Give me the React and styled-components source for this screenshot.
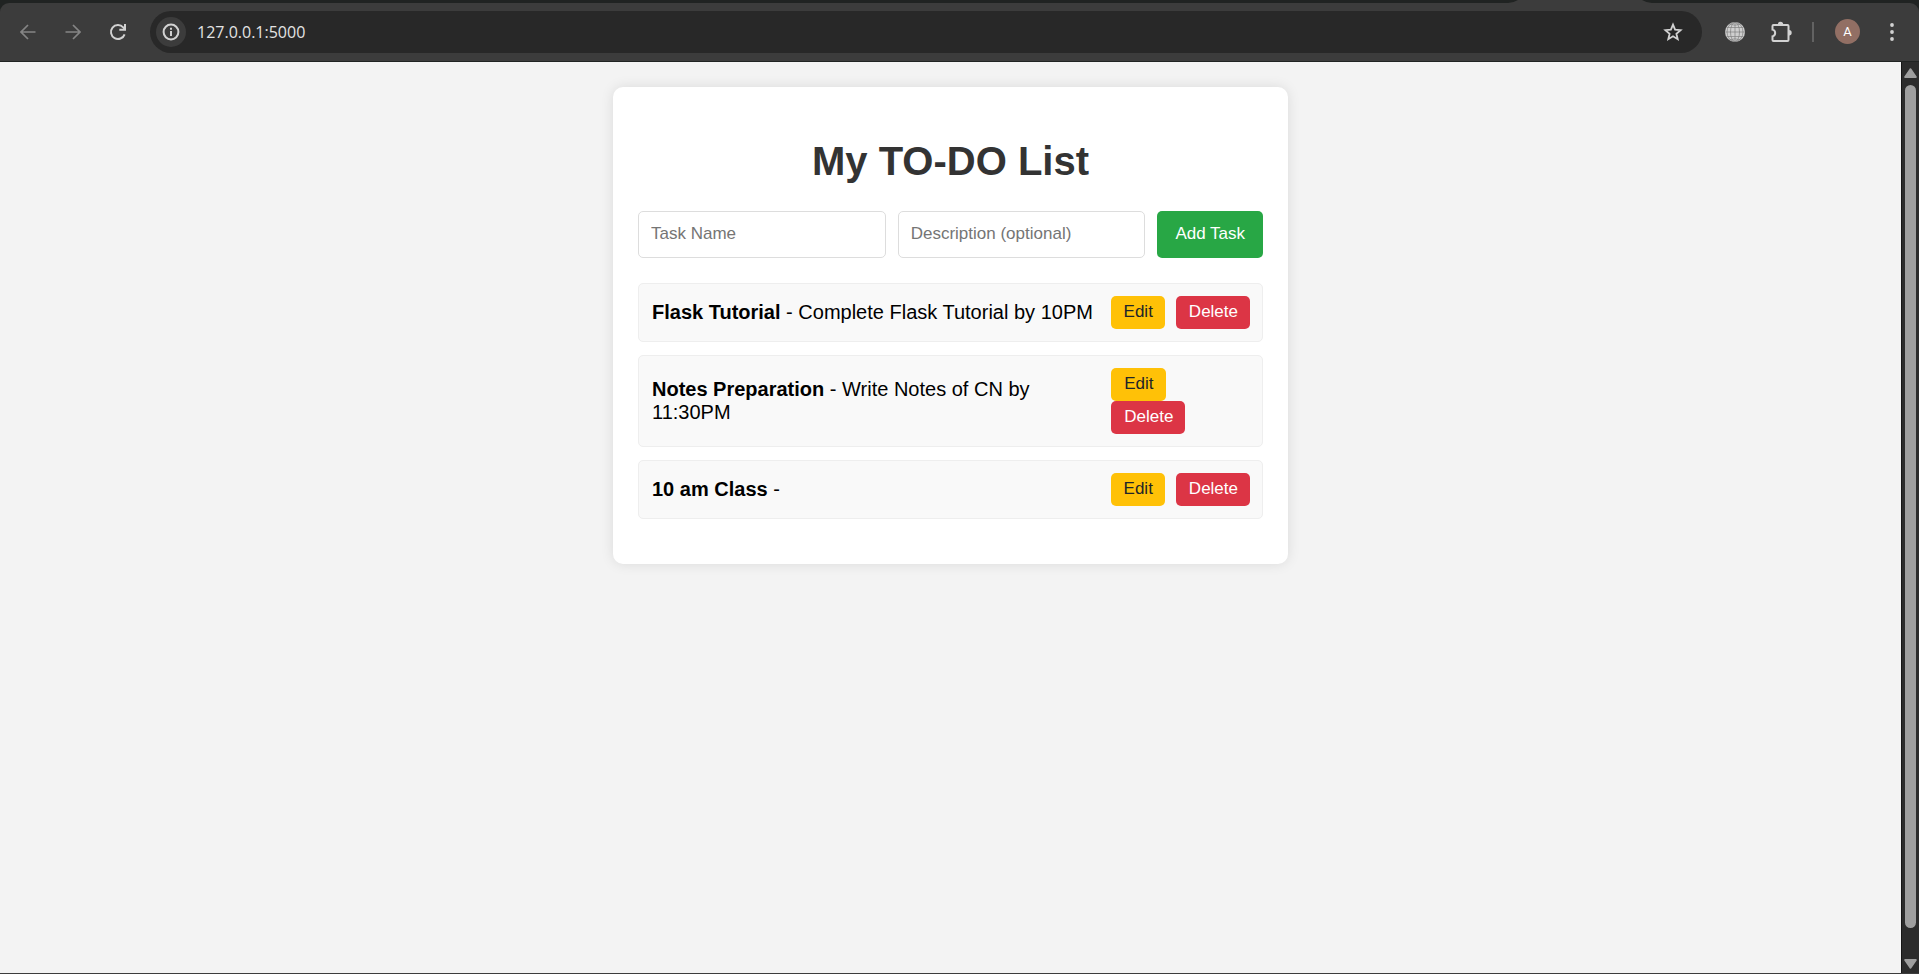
import React from "react";
import styled, { createGlobalStyle } from "styled-components";

const GlobalStyle = createGlobalStyle`
  *, *::before, *::after { box-sizing: border-box; }
  body {
    margin: 0;
    background: #f3f3f3;
    font-family: "Liberation Sans", Arial, sans-serif;
  }
  button, input { font-family: inherit; }
  svg { display: block; }
`;

const Window = styled.div`
  display: flex;
  flex-direction: column;
  min-height: 100vh;
  border-bottom: 1px solid #3c3c3c;
`;

const TabStrip = styled.div`
  display: flex;
  justify-content: flex-end;
  height: 3px;
  padding-right: 267px;
  background: #202322;
`;

const Chrome = styled.header`
  background: #202322;
`;

const Toolbar = styled.nav`
  display: flex;
  align-items: center;
  height: 59px;
  padding: 0 12px 1px 13px;
  border-radius: 9px 9px 0 0;
  border-bottom: 1px solid #202322;
  background: #3c3c3c;
`;

const IconButton = styled.button`
  display: grid;
  place-items: center;
  flex: none;
  width: 30px;
  height: 30px;
  margin: 0;
  padding: 0;
  border: 0;
  border-radius: 15px;
  background: ${(p) => p.$fill || "transparent"};
  color: ${(p) => (p.$dim ? "#858585" : "#d2d2d2")};
`;

const NavButtons = styled.div`
  display: flex;
  gap: 15px;
  margin-right: 17px;
`;

const AddressBar = styled.div`
  display: flex;
  flex: 1;
  align-items: center;
  height: 42px;
  padding: 0 14px 0 6px;
  border-radius: 21px;
  background: #282828;
`;

const AddressInput = styled.input`
  flex: 1;
  min-width: 0;
  height: 30px;
  padding: 0 0 0 11px;
  border: 0;
  outline: 0;
  background: transparent;
  color: #e3e3e3;
  font-family: "Open Sans", sans-serif;
  font-size: 16px;
`;

const Tools = styled.div`
  display: flex;
  align-items: center;
  gap: 16px;
  margin-left: 18px;
`;

const Divider = styled.span`
  width: 2px;
  height: 20px;
  background: #626262;
`;

const Avatar = styled.button`
  width: 25px;
  height: 25px;
  margin: 0 1px 0 5px;
  padding: 0;
  border: 0;
  border-radius: 50%;
  background: #926f64;
  color: #fff;
  font-family: Roboto, sans-serif;
  font-size: 13px;
  line-height: 25px;
`;

const Viewport = styled.div`
  display: flex;
  flex: 1;
`;

const Page = styled.main`
  flex: 1;
  min-width: 0;
  padding: 25px;
  background: #f3f3f3;
`;

const ScrollRail = styled.div`
  display: flex;
  flex-direction: column;
  align-items: center;
  gap: 7px;
  width: 18px;
  padding: 6px 1px 4px 0;
  border-left: 1px solid #161616;
  background: #2c2c2c;
  color: #9f9f9f;
`;

const ScrollThumb = styled.div`
  flex: 1;
  width: 11px;
  margin-bottom: 24px;
  border-radius: 6px;
  background: #9f9f9f;
`;

const Card = styled.section`
  max-width: 675px;
  margin: 0 auto;
  padding: 25px;
  border-radius: 10px;
  background: #fff;
  box-shadow: 0 0 13px rgba(0, 0, 0, 0.1);
`;

const Title = styled.h1`
  margin: 26px 0;
  color: #333;
  font-size: 40px;
  line-height: 47px;
  text-align: center;
`;

const TaskForm = styled.form`
  display: flex;
  gap: 12px;
  margin-bottom: 25px;
`;

const Field = styled.input`
  flex: 1;
  min-width: 0;
  height: 47px;
  padding: 0 12px 2px;
  border: 1px solid #ddd;
  border-radius: 5px;
  background: #fff;
  font-size: 17px;
  &::placeholder { color: #757575; opacity: 1; }
`;

const AddButton = styled.button`
  padding: 0 18px 2px;
  border: 0;
  border-radius: 5px;
  background: #28a745;
  color: #fff;
  font-size: 17px;
`;

const TaskList = styled.ul`
  display: flex;
  flex-direction: column;
  gap: 13px;
  margin: 0;
  padding: 0 0 20px;
  list-style: none;
`;

const TaskRow = styled.li`
  display: flex;
  align-items: center;
  justify-content: space-between;
  padding: 12px 12px 12px 13px;
  border: 1px solid #eee;
  border-radius: 5px;
  background: #f9f9f9;
`;

const TaskText = styled.span`
  color: #000;
  font-size: 20px;
  line-height: 23px;
`;

const Actions = styled.div`
  display: flex;
  flex-wrap: wrap;
  column-gap: 11px;
`;

const tones = {
  edit: { fill: "#ffc107", ink: "#212529" },
  remove: { fill: "#dc3545", ink: "#fff" },
};

const ActionButton = styled.button`
  height: 33px;
  padding: 0 12px 2px 13px;
  border: 0;
  border-radius: 5px;
  background: ${(p) => tones[p.$tone].fill};
  color: ${(p) => tones[p.$tone].ink};
  font-size: 17px;
`;

const tasks = [
  { name: "Flask Tutorial", description: "Complete Flask Tutorial by 10PM" },
  { name: "Notes Preparation", description: "Write Notes of CN by 11:30PM" },
  { name: "10 am Class", description: "" },
];

const stroke = { fill: "none", stroke: "currentColor", strokeWidth: 2 };

const ArrowIcon = ({ flip }) => (
  <svg width="16" height="16" viewBox="0 0 16 16" {...stroke} strokeWidth="1.7">
    <path d={flip ? "M0.5 8H14M8 1l7 7-7 7" : "M15.5 8H2M8 1L1 8l7 7"} />
  </svg>
);

const ReloadIcon = () => (
  <svg width="18" height="18" viewBox="0 0 18 18" {...stroke}>
    <path d="M15.6 11.3A7 7 0 1 1 14.2 4.3L16 6.2" />
    <path d="M16 1v5.7h-5.7" />
  </svg>
);

const InfoIcon = () => (
  <svg width="18" height="18" viewBox="0 0 18 18" {...stroke}>
    <circle cx="9" cy="9" r="7.4" />
    <path d="M9 8v5M9 4.8v2" />
  </svg>
);

const StarIcon = () => (
  <svg width="20" height="20" viewBox="0 0 20 20" {...stroke} strokeWidth="1.8">
    <path d="M10 2.6l2.1 5.1 5.5.5-4.2 3.6 1.3 5.4L10 14.3l-4.7 2.9 1.3-5.4-4.2-3.6 5.5-.5z" />
  </svg>
);

const GlobeIcon = () => (
  <svg width="20" height="20" viewBox="0 0 20 20">
    <circle cx="10" cy="10" r="10" fill="#cfcfcf" />
    <g fill="none" stroke="#808080" strokeWidth="0.7">
      <ellipse cx="10" cy="10" rx="4.5" ry="9.6" />
      <ellipse cx="10" cy="10" rx="8" ry="9.6" />
      <path d="M10 0v20M0 10h20M1.5 5.5h17M1.5 14.5h17M4.5 2.2q5.5 2 11 0M4.5 17.8q5.5-2 11 0" />
    </g>
  </svg>
);

const PuzzleIcon = () => (
  <svg width="22" height="22" viewBox="0 0 22 22">
    <path
      d="M3.5 4h14a1 1 0 0 1 1 1v14a1 1 0 0 1-1 1h-14a1 1 0 0 1-1-1v-3.6a3.5 3.5 0 0 0 0-6.8V5a1 1 0 0 1 1-1z"
      {...stroke}
    />
    <path d="M7.8 3.5a2.7 2.7 0 0 1 5.4 0zM19 9a2.7 2.7 0 0 1 0 5.4z" fill="currentColor" />
  </svg>
);

const MenuIcon = () => (
  <svg width="4" height="18" viewBox="0 0 4 18" fill="currentColor">
    <circle cx="2" cy="2" r="1.9" />
    <circle cx="2" cy="9" r="1.9" />
    <circle cx="2" cy="16" r="1.9" />
  </svg>
);

const TabFoot = () => (
  <svg width="144" height="3" viewBox="0 0 144 3" fill="#3c3c3c">
    <path d="M0 3Q6 2.6 10 0h124q4 2.6 10 3z" />
  </svg>
);

const ScrollArrow = ({ down }) => (
  <svg width="13" height="10" viewBox="0 0 13 10" fill="currentColor" stroke="currentColor" strokeLinejoin="round" strokeWidth="2">
    <path d={down ? "M1.2 1h10.6L6.5 8.8z" : "M1.2 9h10.6L6.5 1.2z"} />
  </svg>
);

export default function App() {
  return (
    <Window>
      <GlobalStyle />
      <Chrome>
        <TabStrip>
          <TabFoot />
        </TabStrip>
        <Toolbar aria-label="Browser">
          <NavButtons>
            <IconButton $dim aria-label="Back"><ArrowIcon /></IconButton>
            <IconButton $dim aria-label="Forward"><ArrowIcon flip /></IconButton>
            <IconButton aria-label="Reload"><ReloadIcon /></IconButton>
          </NavButtons>
          <AddressBar>
            <IconButton $fill="#3c3c3c" aria-label="Site information"><InfoIcon /></IconButton>
            <AddressInput aria-label="Address" defaultValue="127.0.0.1:5000" />
            <IconButton aria-label="Bookmark"><StarIcon /></IconButton>
          </AddressBar>
          <Tools>
            <IconButton aria-label="Web"><GlobeIcon /></IconButton>
            <IconButton aria-label="Extensions"><PuzzleIcon /></IconButton>
            <Divider />
            <Avatar aria-label="Profile">A</Avatar>
            <IconButton aria-label="Menu"><MenuIcon /></IconButton>
          </Tools>
        </Toolbar>
      </Chrome>
      <Viewport>
        <Page>
          <Card>
            <Title>My TO-DO List</Title>
            <TaskForm onSubmit={(event) => event.preventDefault()}>
              <Field aria-label="Task Name" placeholder="Task Name" />
              <Field aria-label="Description" placeholder="Description (optional)" />
              <AddButton type="submit">Add Task</AddButton>
            </TaskForm>
            <TaskList>
              {tasks.map((task) => (
                <TaskRow key={task.name}>
                  <TaskText>
                    <strong>{task.name}</strong> - {task.description}
                  </TaskText>
                  <Actions>
                    <ActionButton type="button" $tone="edit">Edit</ActionButton>
                    <ActionButton type="button" $tone="remove">Delete</ActionButton>
                  </Actions>
                </TaskRow>
              ))}
            </TaskList>
          </Card>
        </Page>
        <ScrollRail aria-hidden="true">
          <ScrollArrow />
          <ScrollThumb />
          <ScrollArrow down />
        </ScrollRail>
      </Viewport>
    </Window>
  );
}
